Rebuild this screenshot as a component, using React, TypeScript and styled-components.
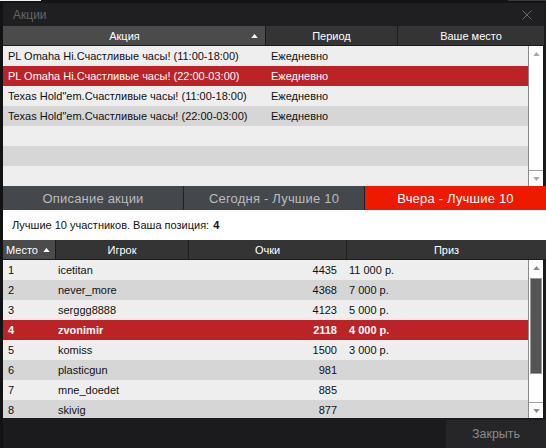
import React from "react";
import styled, { createGlobalStyle } from "styled-components";

const GlobalStyle = createGlobalStyle`
  html, body { margin: 0; padding: 0; background: #1b1b1d; }
  body { font-family: "Liberation Sans", Arial, sans-serif; }
  * { box-sizing: border-box; }
`;

const Window = styled.div`
  width: 546px;
  height: 448px;
  display: flex;
  flex-direction: column;
  background: #1b1b1d;
  overflow: hidden;
`;

const TopStrip = styled.div`
  height: 3px;
  display: flex;
  justify-content: space-between;
  background: #131315;
`;

const StripMark = styled.div<{ $w: number; $c: string }>`
  width: ${(p) => p.$w}px;
  height: 1px;
  background: ${(p) => p.$c};
`;

const Frame = styled.div`
  flex: 1;
  display: flex;
  flex-direction: column;
  border-left: 3px solid #121214;
  min-height: 0;
`;

const TitleBar = styled.div`
  height: 23px;
  display: flex;
  align-items: center;
  justify-content: space-between;
  padding: 0 12px 0 10px;
  background: #1f1f21;
  margin-right: 2px;
`;

const Title = styled.span`
  color: #666668;
  font-size: 12px;
`;

const HeaderRow = styled.div<{ $cols: string; $right: number }>`
  display: grid;
  grid-template-columns: ${(p) => p.$cols};
  column-gap: 1px;
  height: 20px;
  background: #1c1c1c;
  border-bottom: 1px solid #1c1c1c;
  margin-right: ${(p) => p.$right}px;
`;

const HeaderCell = styled.div<{ $active?: boolean; $align?: string }>`
  display: flex;
  align-items: center;
  justify-content: ${(p) => p.$align || "center"};
  gap: 5px;
  padding: 0 ${(p) => (p.$align === "flex-start" ? "3px" : "0")};
  background: ${(p) => (p.$active ? "#4b4b4b" : "#343434")};
  color: #ffffff;
  font-size: 11px;
  white-space: nowrap;
`;

const HeaderLabel = styled.span`
  flex: 1;
  text-align: center;
`;

const SortIcon = styled.svg`
  width: 8px;
  height: 5px;
  flex: none;
`;

const SortSlot = styled.span`
  width: 14px;
  display: flex;
`;

const TableBody = styled.div<{ $h: number }>`
  display: flex;
  height: ${(p) => p.$h}px;
  margin-right: 3px;
`;

const RowList = styled.div`
  width: 525px;
  display: flex;
  flex-direction: column;
  overflow: hidden;
`;

const Row = styled.div<{ $cols: string; $tone: "light" | "dark" | "sel"; $bold?: boolean }>`
  flex: none;
  display: grid;
  grid-template-columns: ${(p) => p.$cols};
  height: 20px;
  align-items: center;
  font-size: 11px;
  font-weight: ${(p) => (p.$bold ? 700 : 400)};
  background: ${(p) => (p.$tone === "sel" ? "#bb2327" : p.$tone === "dark" ? "#d6d6d6" : "#eeeeee")};
  color: ${(p) => (p.$tone === "sel" ? "#ffffff" : "#111111")};
`;

const Cell = styled.div<{ $pl?: number; $pr?: number; $right?: boolean }>`
  padding-left: ${(p) => p.$pl ?? 0}px;
  padding-right: ${(p) => p.$pr ?? 0}px;
  text-align: ${(p) => (p.$right ? "right" : "left")};
  white-space: nowrap;
  overflow: hidden;
`;

const Scrollbar = styled.div`
  width: 15px;
  display: flex;
  flex-direction: column;
  background: #ffffff;
  border-left: 1px solid #8a8a8a;
`;

const ScrollBtn = styled.div<{ $bottom?: boolean }>`
  height: 16px;
  display: flex;
  align-items: center;
  justify-content: center;
  flex: none;
  border-top: ${(p) => (p.$bottom ? "1px solid #a0a0a0" : "none")};
`;

const Track = styled.div`
  flex: 1;
  display: flex;
  flex-direction: column;
  padding: 2px 0 0 1px;
`;

const Thumb = styled.div<{ $h: number }>`
  height: ${(p) => p.$h}px;
  width: 12px;
  background: #555555;
  border: 1px solid #9a9a9a;
`;

const Tabs = styled.div`
  display: grid;
  grid-template-columns: 180px 180px 1fr;
  column-gap: 1px;
  height: 24px;
  background: #222226;
`;

const Tab = styled.div<{ $active?: boolean }>`
  display: flex;
  align-items: center;
  justify-content: center;
  font-size: 13px;
  letter-spacing: 0.2px;
  background: ${(p) => (p.$active ? "#ee1a00" : "#44474c")};
  color: ${(p) => (p.$active ? "#ffffff" : "#bcbcbc")};
`;

const Info = styled.div`
  height: 30px;
  display: flex;
  align-items: center;
  padding-left: 9px;
  background: #ffffff;
  color: #111111;
  font-size: 11px;
  b { margin-left: 4px; }
`;

const Footer = styled.div`
  flex: 1;
  display: flex;
  justify-content: flex-end;
  align-items: flex-end;
`;

const CloseButton = styled.div`
  width: 100px;
  height: 28px;
  display: flex;
  align-items: center;
  justify-content: center;
  background: #262628;
  color: #8a8a8a;
  font-size: 12.5px;
`;

const Tri = ({ up, color, w = 7, h = 4 }: { up: boolean; color: string; w?: number; h?: number }) => (
  <SortIcon viewBox="0 0 8 5" style={{ width: w, height: h }}>
    <polygon points={up ? "0,5 4,0 8,5" : "0,0 8,0 4,5"} fill={color} />
  </SortIcon>
);

const promos = [
  ["PL Omaha Hi.Счастливые часы! (11:00-18:00)", "Ежедневно"],
  ["PL Omaha Hi.Счастливые часы! (22:00-03:00)", "Ежедневно"],
  ["Texas Hold\"em.Счастливые часы! (11:00-18:00)", "Ежедневно"],
  ["Texas Hold\"em.Счастливые часы! (22:00-03:00)", "Ежедневно"],
  ["", ""],
  ["", ""],
  ["", ""],
];

const players = [
  ["1", "icetitan", "4435", "11 000 р."],
  ["2", "never_more", "4368", "7 000 р."],
  ["3", "serggg8888", "4123", "5 000 р."],
  ["4", "zvonimir", "2118", "4 000 р."],
  ["5", "komiss", "1500", "3 000 р."],
  ["6", "plasticgun", "981", ""],
  ["7", "mne_doedet", "885", ""],
  ["8", "skivig", "877", ""],
];

const COLS1 = "262px 131px 1fr";
const COLS2 = "52px 132px 157px 1fr";

export default function App() {
  return (
    <>
      <GlobalStyle />
      <Window>
        <TopStrip>
          <StripMark $w={41} $c="#f2f2f2" />
          <StripMark $w={38} $c="#3a3a3c" />
        </TopStrip>
        <Frame>
          <TitleBar>
            <Title>Акции</Title>
            <svg width="10" height="10" viewBox="0 0 10 10">
              <path d="M0.5 0.5 L9.5 9.5 M9.5 0.5 L0.5 9.5" stroke="#6a6a6a" strokeWidth="1" />
            </svg>
          </TitleBar>
          <HeaderRow $cols={COLS1} $right={2}>
            <HeaderCell $active>
              <HeaderLabel>Акция</HeaderLabel>
              <SortSlot>
                <Tri up color="#ffffff" />
              </SortSlot>
            </HeaderCell>
            <HeaderCell>Период</HeaderCell>
            <HeaderCell>Ваше место</HeaderCell>
          </HeaderRow>
          <TableBody $h={140}>
            <RowList>
              {promos.map((r, i) => (
                <Row key={i} $cols={COLS1} $tone={i === 1 ? "sel" : i % 2 === 1 ? "dark" : "light"}>
                  <Cell $pl={5}>{r[0]}</Cell>
                  <Cell $pl={6}>{r[1]}</Cell>
                  <Cell />
                </Row>
              ))}
            </RowList>
            <Scrollbar>
              <ScrollBtn>
                <Tri up color="#a8a8a8" />
              </ScrollBtn>
              <Track />
              <ScrollBtn $bottom>
                <Tri up={false} color="#a8a8a8" />
              </ScrollBtn>
            </Scrollbar>
          </TableBody>
          <Tabs>
            <Tab>Описание акции</Tab>
            <Tab>Сегодня - Лучшие 10</Tab>
            <Tab $active>Вчера - Лучшие 10</Tab>
          </Tabs>
          <Info>
            Лучшие 10 участников. Ваша позиция: <b>4</b>
          </Info>
          <HeaderRow $cols={COLS2} $right={0}>
            <HeaderCell $active $align="flex-start">
              Место
              <Tri up color="#ffffff" />
            </HeaderCell>
            <HeaderCell>Игрок</HeaderCell>
            <HeaderCell>Очки</HeaderCell>
            <HeaderCell>Приз</HeaderCell>
          </HeaderRow>
          <TableBody $h={158}>
            <RowList>
              {players.map((r, i) => (
                <Row
                  key={i}
                  $cols={COLS2}
                  $tone={i === 3 ? "sel" : i % 2 === 1 ? "dark" : "light"}
                  $bold={i === 3}
                >
                  <Cell $pl={5}>{r[0]}</Cell>
                  <Cell $pl={3}>{r[1]}</Cell>
                  <Cell $right $pr={7}>{r[2]}</Cell>
                  <Cell $pl={5}>{r[3]}</Cell>
                </Row>
              ))}
            </RowList>
            <Scrollbar>
              <ScrollBtn>
                <Tri up color="#8a8a8a" />
              </ScrollBtn>
              <Track>
                <Thumb $h={96} />
              </Track>
              <ScrollBtn $bottom>
                <Tri up={false} color="#8a8a8a" />
              </ScrollBtn>
            </Scrollbar>
          </TableBody>
          <Footer>
            <CloseButton>Закрыть</CloseButton>
          </Footer>
        </Frame>
      </Window>
    </>
  );
}
